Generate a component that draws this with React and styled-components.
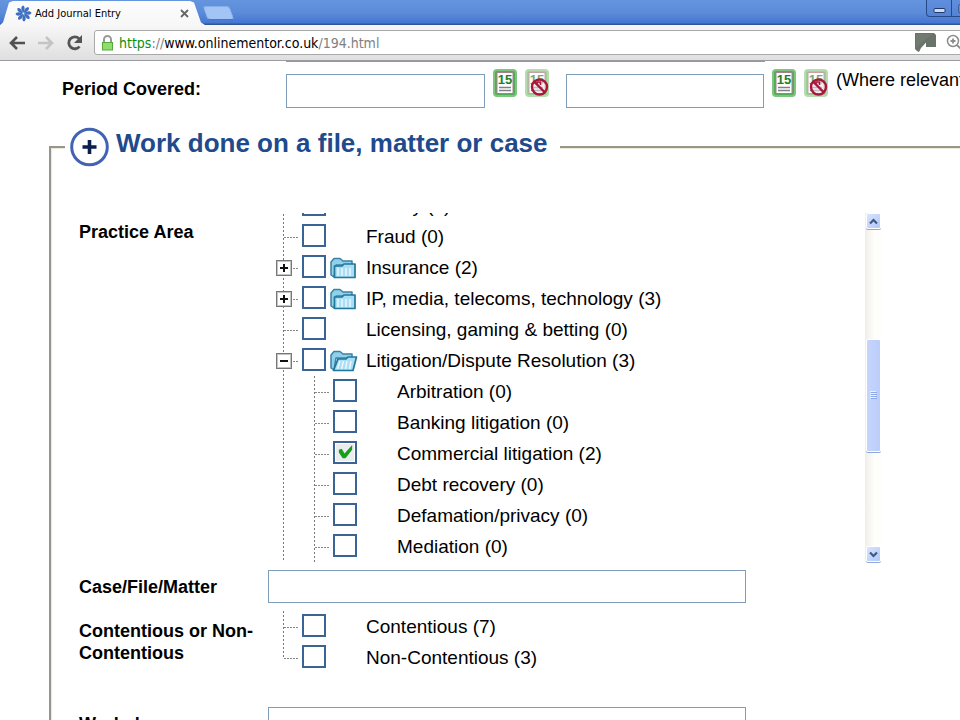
import React from "react";
import styled, { createGlobalStyle, css } from "styled-components";

const GlobalStyle = createGlobalStyle`
  * { box-sizing: border-box; }
  html, body, #root { height: 100%; }
  body {
    margin: 0;
    overflow: hidden;
    background: #fff;
    color: #000;
    font-family: "Liberation Sans", Arial, sans-serif;
    font-size: 19px;
  }
  button { padding: 0; font: inherit; cursor: pointer; }
`;

const uiFont = css`
  font-family: "DejaVu Sans Condensed", "DejaVu Sans", Tahoma, sans-serif;
`;

const Browser = styled.div`
  display: flex;
  flex-direction: column;
  height: 100vh;
  overflow: hidden;
`;

const TabStrip = styled.header`
  display: flex;
  flex: none;
  height: 25px;
  background: linear-gradient(#6595de, #5c8bd9 50%, #4577d3 92%, #2f5596 96%);
`;

const Tab = styled.div`
  display: flex;
  align-items: center;
  width: 205px;
  padding: 2px 16px 0 15px;
  background: linear-gradient(#fdfdfd, #f7f7f7);
  clip-path: polygon(0 100%, 3px 90%, 9px 10%, 13px 4%, 190px 4%, 194px 10%, 201px 90%, 205px 100%);
`;

const TabTitle = styled.span`
  ${uiFont}
  flex: 1;
  margin-left: 3px;
  font-size: 11px;
  white-space: nowrap;
`;

const PlainButton = styled.button`
  display: flex;
  border: 0;
  background: none;
`;

const NewTab = styled.button`
  width: 27px;
  height: 14px;
  margin: 6px auto 0 0;
  border: 1px solid #86aee9;
  border-bottom-color: #4a74bd;
  border-radius: 3px;
  background: #a3c5f5;
  transform: skewX(20deg);
`;

const WindowButtons = styled.div`
  display: flex;
  height: 17px;
  margin-right: -18px;
  border: 1px solid #27498a;
  border-top: 0;
  border-radius: 0 0 4px 4px;
  background: linear-gradient(#5f8fdc, #5583d4);
`;

const WindowButton = styled.button`
  display: flex;
  align-items: center;
  justify-content: center;
  width: 25px;
  border: 0;
  border-right: 1px solid #27498a;
  background: none;
`;

const Toolbar = styled.nav`
  display: flex;
  align-items: center;
  flex: none;
  gap: 11px;
  height: 36px;
  padding: 0 0 0 8px;
  background: linear-gradient(#f7f7f7, #dfdfdf);
  border-bottom: 1px solid #9b9da3;
`;

const AddressBar = styled.form`
  display: flex;
  align-items: center;
  flex: 1;
  height: 25px;
  margin: 0 -20px 0 0;
  padding: 0 20px 0 6px;
  border: 1px solid #a9a9a9;
  border-radius: 3px;
  background: #fff;
`;

const Url = styled.a`
  ${uiFont}
  flex: 1;
  margin-left: 5px;
  color: #000;
  font-size: 14px;
  text-decoration: none;
  white-space: nowrap;
`;

const UrlPart = styled.span`
  color: ${(p) => (p.$secure ? "#0b900b" : "#808080")};
`;

const AddressIcons = styled.span`
  display: flex;
  align-items: center;
  gap: 10px;
  margin-right: -5px;
`;

const Page = styled.main`
  flex: 1;
  min-height: 0;
  overflow: hidden;
`;

const TextInput = styled.input`
  width: ${(p) => p.$width};
  height: 33px;
  padding: 0 6px;
  border: 1px solid #7f9db9;
  background: #fff;
  font: inherit;
`;

const PeriodRow = styled.div`
  display: grid;
  grid-template-columns: 224px 1fr;
  padding-left: 62px;
`;

const PreviousEntry = styled.div`
  grid-column: 2;
  width: 479px;
  height: 1px;
  margin-bottom: 7px;
  background: #8b98ad;
`;

const Label = styled.label`
  font-size: 18px;
  font-weight: bold;
  line-height: 22px;
  padding-top: ${(p) => p.$top}px;
`;

const DateFields = styled.div`
  display: flex;
  align-items: flex-start;
`;

const DateInput = styled(TextInput)`
  flex: none;
  height: 34px;
  margin-top: 5px;
`;

const DateTools = styled.span`
  display: flex;
  flex: none;
  gap: 8px;
  margin: 0 8px;
  & + input { margin-left: 9px; }
`;

const Note = styled.span`
  font-size: 18px;
  line-height: 22px;
  white-space: nowrap;
`;

const Section = styled.fieldset`
  margin: 19px -20px 0 49px;
  padding: 46px 0 0 27px;
  border: 3px groove #ece9d8;
`;

const SectionTitle = styled.legend`
  display: flex;
  align-items: center;
  gap: 7px;
  height: 40px;
  margin-left: -14px;
  padding: 0 12px 0 5px;
`;

const Heading = styled.h2`
  margin: 0;
  padding-bottom: 9px;
  color: #204a8c;
  font-size: 26px;
  line-height: 30px;
`;

const Field = styled.div`
  display: grid;
  grid-template-columns: 189px minmax(0, 1fr);
  margin-bottom: ${(p) => p.$gap}px;
`;

const TreePane = styled.div`
  display: flex;
  width: 613px;
  height: 349px;
`;

const TreeClip = styled.div`
  display: flex;
  flex: 1;
  flex-direction: column;
  justify-content: flex-end;
  overflow: hidden;
`;

const Tree = styled.ul`
  flex: none;
  margin: 0 0 0 ${(p) => (p.$nested ? 31 : 8)}px;
  padding: 0;
  list-style: none;
  background: repeating-linear-gradient(#777 0 2px, transparent 2px 4px) 7px 0 / 1px
    ${(p) => (p.$ends ? "calc(100% - 15px)" : "100%")} no-repeat;
`;

const TreeRow = styled.div`
  display: flex;
  align-items: center;
  height: 31px;
`;

const Branch = styled.span`
  display: flex;
  align-items: center;
  width: 26px;
  height: 17px;
  background: repeating-linear-gradient(90deg, #888 0 2px, transparent 2px 3px) 8px 9px / 15px 1px no-repeat;
`;

const Toggle = styled.button`
  display: flex;
  align-items: center;
  justify-content: center;
  width: 16px;
  height: 16px;
  border: 1px solid #777;
  box-shadow: inset 0 0 0 1px #c4c4c4;
  background: #fff;
`;

const Check = styled.input`
  appearance: none;
  width: 24px;
  height: 23px;
  margin: 0 0 2px;
  border: 2px solid #3a6496;
  background: #fff;
  &:checked {
    background: #ececec
      url("data:image/svg+xml,%3Csvg xmlns='http://www.w3.org/2000/svg' viewBox='0 0 20 20'%3E%3Cpath d='M3 7l3-1 3 5 8-9v5l-7 9-3 0-4-6z' fill='%2314a01c'/%3E%3C/svg%3E")
      center / 19px 19px no-repeat;
    box-shadow: inset 0 0 0 1px #fff;
  }
`;

const FolderSlot = styled.span`
  display: flex;
  width: 40px;
  padding-left: 4px;
`;

const ItemLabel = styled.label`
  line-height: 22px;
  white-space: nowrap;
`;

const ScrollTrack = styled.div`
  display: flex;
  flex-direction: column;
  align-items: flex-end;
  width: 16px;
  background: linear-gradient(90deg, #f1eeea, #fefefa 60%);
`;

const ScrollButton = styled.button`
  display: flex;
  align-items: center;
  justify-content: center;
  width: 15px;
  height: 16px;
  border: 1px solid #fff;
  box-shadow: 0 1px 0 #8fa8dc;
  border-radius: 2px;
  background: linear-gradient(135deg, #d8e4ff, #b2c8f8);
`;

const ScrollThumb = styled.div`
  display: flex;
  align-items: center;
  justify-content: center;
  width: 15px;
  height: 113px;
  margin: 110px 0 auto;
  border: 1px solid #fff;
  border-radius: 2px;
  box-shadow: 0 1px 0 #8fa8dc;
  background: linear-gradient(90deg, #c5d5fe, #bccdfb);
`;

function Favicon() {
  return (
    <svg width="17" height="17" viewBox="0 0 17 17" aria-hidden="true">
      {[0, 45, 90, 135, 180, 225, 270, 315].map((a) => (
        <path key={a} d="M8.500 8C5.500 5 5.800 1.500 8 .5Q11 1.500 8.500 8z" fill="#3f6fc0" transform={`rotate(${a} 8.500 8.500)`} />
      ))}
    </svg>
  );
}

function CalendarIcon({ cleared }) {
  return (
    <svg width="24" height="28" viewBox="0 0 24 28" aria-hidden="true">
      <rect x="1" y="1" width="22" height="26" rx="3" fill={cleared ? "#9fcf98" : "#55a95a"} stroke={cleared ? "#b4dcae" : "#7cc57c"} strokeWidth="2" />
      <rect x="4" y="3.500" width="16" height="21" fill="#fff" stroke={cleared ? "#c9a0a8" : "#a8808c"} />
      <text x="12" y="15" textAnchor="middle" fontFamily="Liberation Sans" fontSize="13" fontWeight="bold" fill={cleared ? "#78a878" : "#1c8220"}>15</text>
      <path d="M6 18.500h12M6 21.500h12" stroke="#808088" strokeWidth="1.500" />
      {cleared && (
        <g fill="none" stroke="#a8173a" strokeWidth="2.400">
          <circle cx="14.500" cy="18" r="7.500" fill="#f0dfe6" fillOpacity=".6" />
          <path d="M9.500 13l10 10" />
          <path d="M12 15v-2h3.500v3" strokeWidth="1.500" />
        </g>
      )}
    </svg>
  );
}

function FolderIcon({ open }) {
  return (
    <svg width="28" height="22" viewBox="0 0 28 22" aria-hidden="true">
      <path d="M1 18V5l3-3.500h6L13 4h9v4H6L4 20z" fill="#8fd0ea" stroke="#3a83a3" strokeWidth="1.500" strokeLinejoin="round" />
      {open ? (
        <>
          <path d="M3.500 20.500L8 9h8l2-2h8.500L23 20.500z" fill="#a9def5" stroke="#22779b" strokeWidth="1.700" strokeLinejoin="round" />
          <path d="M10 11L7.500 19M13.500 11l-2 8M17 11l-1.500 8M21 11l-1.500 8" stroke="#e9f8ff" strokeWidth="1.500" />
        </>
      ) : (
        <>
          <path d="M4.500 20.500V9H12l2-2h11v13.500z" fill="#a9def5" stroke="#22779b" strokeWidth="1.700" strokeLinejoin="round" />
          <path d="M8 11v8M12 11v8M16 11v8M20 11v8" stroke="#e9f8ff" strokeWidth="1.500" />
        </>
      )}
    </svg>
  );
}

function SignIcon({ minus }) {
  return (
    <svg width="10" height="10" viewBox="0 0 10 10" aria-hidden="true">
      <path d={minus ? "M1 5h8" : "M1 5h8M5 1v8"} stroke="#111" strokeWidth="2" />
    </svg>
  );
}

function Chevron({ down }) {
  return (
    <svg width="9" height="7" viewBox="0 0 9 7" aria-hidden="true">
      <path d={down ? "M1 1.500l3.500 3.500L8 1.500" : "M1 5.500L4.500 2 8 5.500"} fill="none" stroke="#42597f" strokeWidth="2.200" />
    </svg>
  );
}

const practiceAreas = [
  { name: "Family (0)" },
  { name: "Fraud (0)" },
  { name: "Insurance (2)", state: "closed" },
  { name: "IP, media, telecoms, technology (3)", state: "closed" },
  { name: "Licensing, gaming & betting (0)" },
  {
    name: "Litigation/Dispute Resolution (3)",
    state: "open",
    children: [
      { name: "Arbitration (0)" },
      { name: "Banking litigation (0)" },
      { name: "Commercial litigation (2)", checked: true },
      { name: "Debt recovery (0)" },
      { name: "Defamation/privacy (0)" },
      { name: "Mediation (0)" },
    ],
  },
];

const contention = [{ name: "Contentious (7)" }, { name: "Non-Contentious (3)" }];

function TreeList({ items, nested, ends }) {
  return (
    <Tree $nested={nested} $ends={ends}>
      {items.map(({ name, state, checked, children }) => (
        <li key={name}>
          <TreeRow>
            <Branch>
              {state && (
                <Toggle type="button" aria-label={`Toggle ${name}`}>
                  <SignIcon minus={state === "open"} />
                </Toggle>
              )}
            </Branch>
            <Check type="checkbox" id={name} defaultChecked={checked} />
            <FolderSlot>{state && <FolderIcon open={state === "open"} />}</FolderSlot>
            <ItemLabel htmlFor={name}>{name}</ItemLabel>
          </TreeRow>
          {children && <TreeList items={children} nested />}
        </li>
      ))}
    </Tree>
  );
}

function DateButtons() {
  return (
    <DateTools>
      <PlainButton type="button" aria-label="Pick date"><CalendarIcon /></PlainButton>
      <PlainButton type="button" aria-label="Clear date"><CalendarIcon cleared /></PlainButton>
    </DateTools>
  );
}

function BrowserChrome() {
  return (
    <>
      <TabStrip>
        <Tab>
          <Favicon />
          <TabTitle>Add Journal Entry</TabTitle>
          <PlainButton type="button" aria-label="Close tab">
            <svg width="9" height="9" viewBox="0 0 9 9"><path d="M1 1l7 7M8 1L1 8" stroke="#666" strokeWidth="1.800" /></svg>
          </PlainButton>
        </Tab>
        <NewTab type="button" aria-label="New tab" />
        <WindowButtons>
          <WindowButton type="button" aria-label="Minimise">
            <svg width="13" height="13" viewBox="0 0 13 13"><rect x="1" y="6.500" width="11" height="4" rx="1" fill="#c9dbf8" stroke="#22386a" /></svg>
          </WindowButton>
          <WindowButton type="button" aria-label="Maximise">
            <svg width="13" height="13" viewBox="0 0 13 13"><rect x="1" y="2.500" width="11" height="8" rx="1" fill="#c9dbf8" stroke="#22386a" /></svg>
          </WindowButton>
        </WindowButtons>
      </TabStrip>
      <Toolbar>
        <PlainButton type="button" aria-label="Back">
          <svg width="18" height="16" viewBox="0 0 18 16"><path d="M17 8H3M9 2L3 8l6 6" fill="none" stroke="#505050" strokeWidth="2.600" /></svg>
        </PlainButton>
        <PlainButton type="button" aria-label="Forward">
          <svg width="18" height="16" viewBox="0 0 18 16"><path d="M1 8h14M9 2l6 6-6 6" fill="none" stroke="#c4c4c4" strokeWidth="2.600" /></svg>
        </PlainButton>
        <PlainButton type="button" aria-label="Reload">
          <svg width="17" height="18" viewBox="1 0 17 18"><path d="M14.500 12.500A6 6 0 1 1 14 4.500" fill="none" stroke="#555" strokeWidth="2.800" /><path d="M17 1v8H9z" fill="#555" /></svg>
        </PlainButton>
        <AddressBar>
          <svg width="13" height="16" viewBox="0 0 13 16" aria-hidden="true">
            <path d="M3 8V4.500a3.500 3.500 0 0 1 7 0V8" fill="none" stroke="#9a9a9a" strokeWidth="2" />
            <rect x="1.500" y="7.500" width="10" height="7.500" fill="#8fdd6a" stroke="#55a83c" />
          </svg>
          <Url href="#">
            <UrlPart $secure>https</UrlPart><UrlPart>://</UrlPart>www.onlinementor.co.uk<UrlPart>/194.html</UrlPart>
          </Url>
          <AddressIcons>
            <svg width="21" height="19" viewBox="0 0 21 19" aria-hidden="true">
              <path d="M0 0h19l2 2v12h-8l-2 0V9.500L6 15l-2 4-2-1-2-2z" fill="#68736a" />
              <path d="M1 1h17l-8 6-9 8z" fill="#717b71" />
            </svg>
            <svg width="18" height="17" viewBox="0 0 18 17" aria-hidden="true">
              <circle cx="7" cy="7" r="5.500" fill="#fff" stroke="#8c8c8c" strokeWidth="1.500" />
              <path d="M4.500 7h5M7 4.500v5M11 11l5 5" stroke="#8c8c8c" strokeWidth="1.800" />
            </svg>
          </AddressIcons>
        </AddressBar>
      </Toolbar>
    </>
  );
}

export default function App() {
  return (
    <Browser>
      <GlobalStyle />
      <BrowserChrome />
      <Page>
        <PeriodRow>
          <PreviousEntry />
          <Label htmlFor="from" $top={9}>Period Covered:</Label>
          <DateFields>
            <DateInput id="from" $width="199px" />
            <DateButtons />
            <DateInput aria-label="Period covered until" $width="198px" />
            <DateButtons />
            <Note>(Where relevant)</Note>
          </DateFields>
        </PeriodRow>
        <Section>
          <SectionTitle>
            <svg width="39" height="40" viewBox="0 0 39 40" aria-hidden="true">
              <circle cx="19.500" cy="20" r="17.800" fill="#fff" stroke="#4263b4" strokeWidth="3" />
              <path d="M12.500 20h14M19.500 13v14" stroke="#0b1f4c" strokeWidth="3.600" />
            </svg>
            <Heading>Work done on a file, matter or case</Heading>
          </SectionTitle>
          <Field $gap={8}>
            <Label as="span" $top={8}>Practice Area</Label>
            <TreePane>
              <TreeClip><TreeList items={practiceAreas} /></TreeClip>
              <ScrollTrack>
                <ScrollButton type="button" aria-label="Scroll up"><Chevron /></ScrollButton>
                <ScrollThumb>
                  <svg width="7" height="9" viewBox="0 0 7 9" aria-hidden="true">
                    <path d="M0 .5h6M0 2.500h6M0 4.500h6M0 6.500h6" stroke="#eef4ff" />
                    <path d="M1 1.500h6M1 3.500h6M1 5.500h6M1 7.500h6" stroke="#8ca8e6" />
                  </svg>
                </ScrollThumb>
                <ScrollButton type="button" aria-label="Scroll down"><Chevron down /></ScrollButton>
              </ScrollTrack>
            </TreePane>
          </Field>
          <Field $gap={8}>
            <Label htmlFor="matter" $top={6}>Case/File/Matter</Label>
            <TextInput id="matter" $width="478px" />
          </Field>
          <Field $gap={34}>
            <Label as="span" $top={9}>Contentious or Non-Contentious</Label>
            <TreeList items={contention} ends />
          </Field>
          <Field $gap={0}>
            <Label htmlFor="work" $top={6}>Work done</Label>
            <TextInput id="work" $width="478px" />
          </Field>
        </Section>
      </Page>
    </Browser>
  );
}
